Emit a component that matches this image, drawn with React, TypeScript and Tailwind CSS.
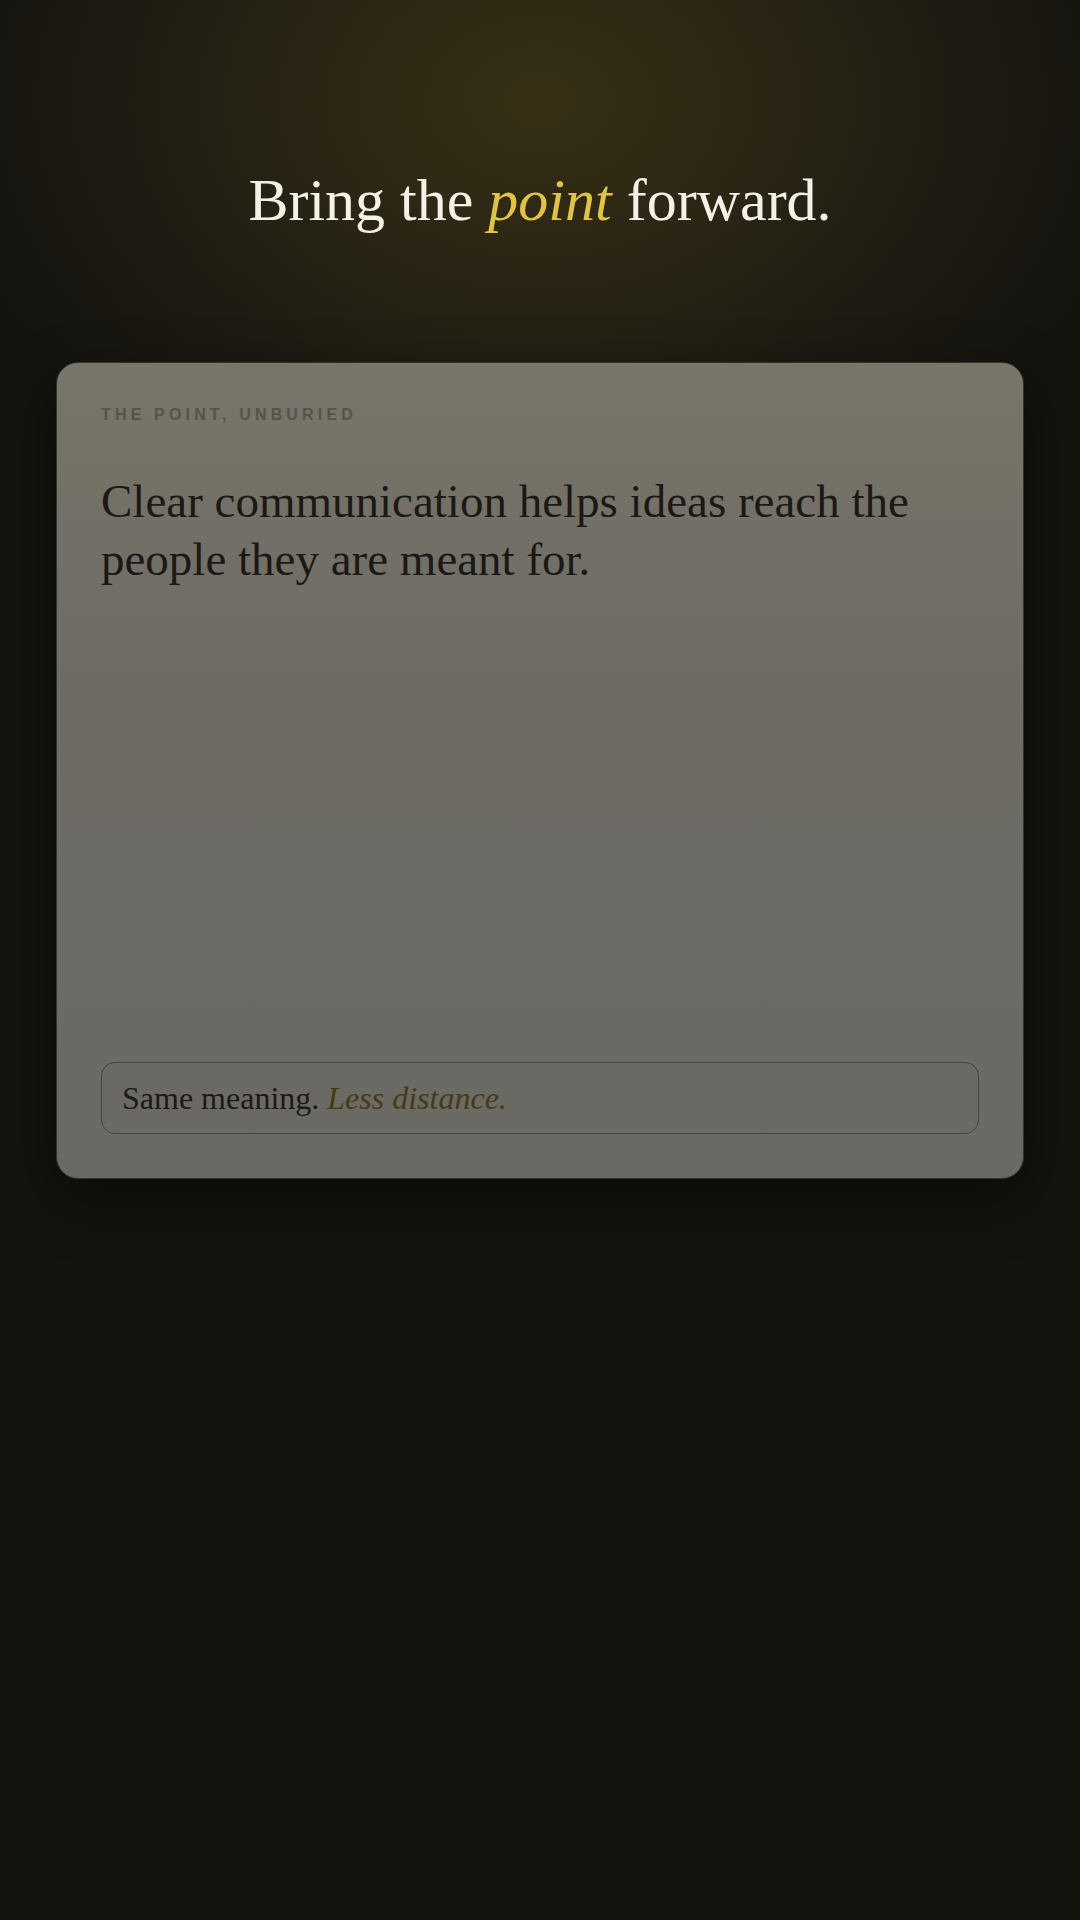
export default function App() {
  return (
    <div className="min-h-[1920px] w-full bg-[#15130e] bg-[radial-gradient(ellipse_600px_440px_at_50%_100px,#373016_0%,#2a2514_40%,#1c1a12_75%,transparent_100%)] px-14 pt-[170px] font-['Georgia','Liberation_Serif',serif]">
      <h1 className="text-center text-[60px] leading-none text-[#f5f1e6]">
        Bring the <em className="text-[#e2c441]">point</em> forward.
      </h1>

      <div className="mt-[132px] flex h-[817px] flex-col rounded-[22px] border border-[#34322d] bg-[linear-gradient(180deg,#787569_0%,#6d6b64_40%,#6b6964_100%)] px-11 pt-10 pb-11 shadow-[0_20px_60px_rgba(0,0,0,0.45)]">
        <p className="font-['Liberation_Sans',Arial,sans-serif] text-[16px] font-bold tracking-[0.26em] text-[#55534c]">
          THE POINT, UNBURIED
        </p>
        <p className="mt-[45px] text-[47px] leading-[58px] text-[#1b1916]">
          Clear communication helps ideas reach the people they are meant for.
        </p>

        <div className="flex-1" />

        <div className="rounded-[14px] border border-[#45433d] px-5 py-[17px] text-[32px] leading-9 text-[#1b1916]">
          Same meaning. <em className="text-[#453b12]">Less distance.</em>
        </div>
      </div>
    </div>
  );
}
